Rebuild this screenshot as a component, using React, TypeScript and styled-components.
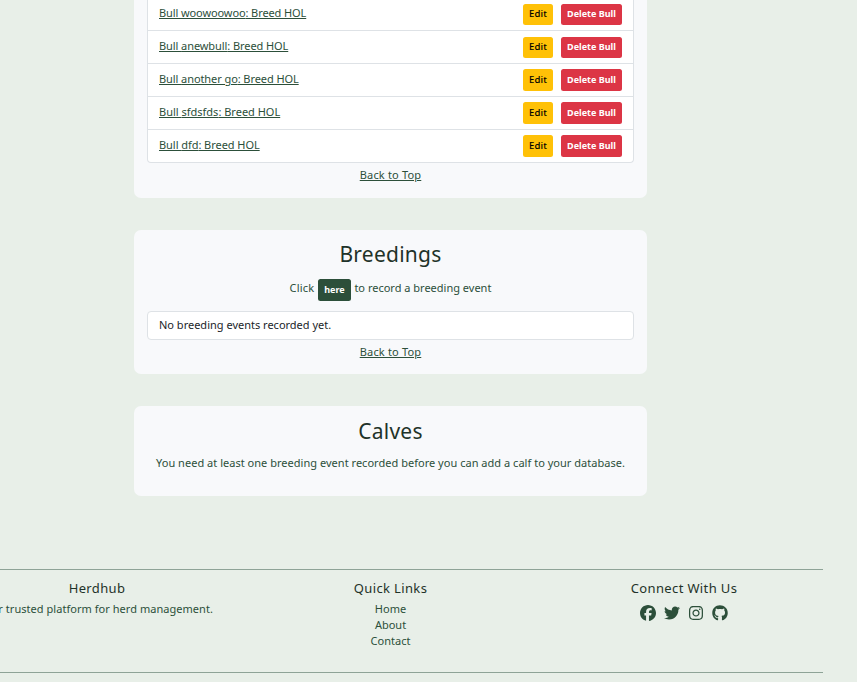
import React from "react";
import styled, { createGlobalStyle } from "styled-components";
import { FaFacebook, FaTwitter, FaInstagram, FaGithub } from "react-icons/fa6";

const GlobalStyle = createGlobalStyle`
  * { box-sizing: border-box; }
  html, body { margin: 0; background: #e8efe8; overflow: hidden; }
  body {
    font-family: "Noto Sans", "Open Sans", sans-serif;
    font-size: 11px;
    line-height: 16px;
    color: #2c4f3a;
  }
  p, h2, h3, ul { margin: 0; padding: 0; font-weight: 400; }
`;

const Page = styled.div`
  display: flex;
  flex-direction: column;
  height: 682px;
  overflow: hidden;
`;

const Sections = styled.main`
  display: flex;
  flex-direction: column;
  gap: 32px;
  width: 513px;
  margin-left: 134px;
`;

const Card = styled.section<{ $height: number; $padTop: number; $continued?: boolean }>`
  height: ${(p) => p.$height}px;
  flex: none;
  padding: ${(p) => p.$padTop}px 13px 0;
  background: #f8f9fb;
  border-radius: ${(p) => (p.$continued ? "0 0 7px 7px" : "7px")};
  text-align: center;
`;

const BullList = styled.ul`
  list-style: none;
  background: #fff;
  border: 1px solid #dee2e6;
  border-top: 0;
  border-radius: 0 0 4px 4px;
`;

const TextLink = styled.a<{ $spacing?: number }>`
  color: #2c4f3a;
  text-decoration: underline;
  text-decoration-thickness: 1px;
  text-underline-offset: 1px;
  letter-spacing: ${(p) => p.$spacing ?? 0}px;
  white-space: nowrap;
`;

const tones = {
  warning: { bg: "#ffc107", fg: "#000" },
  danger: { bg: "#dc3545", fg: "#fff" },
  primary: { bg: "#2c4f3a", fg: "#fff" },
};

const Button = styled.button<{ $tone: keyof typeof tones; $width: number }>`
  flex: none;
  width: ${(p) => p.$width}px;
  height: 22px;
  padding: 0;
  border: 0;
  border-radius: 2.5px;
  background: ${(p) => tones[p.$tone].bg};
  color: ${(p) => tones[p.$tone].fg};
  font: ${(p) => (p.$tone === "warning" ? "500 9.5px" : "700 9px")}/20px "Noto Sans", sans-serif;
  letter-spacing: ${(p) => (p.$tone === "warning" ? 0.2 : 0)}px;
  white-space: nowrap;
`;

const Actions = styled.div`
  display: flex;
  gap: 8px;
`;

const BullRow = styled.li`
  display: flex;
  align-items: flex-start;
  justify-content: space-between;
  height: 33px;
  padding: 5px 11px 0;
  border-bottom: 1px solid #dee2e6;
  > a { margin-top: 2px; }
  &:first-child { height: 31px; padding-top: 4px; }
  &:first-child > a { margin-top: 1px; }
  &:nth-child(2) { padding-top: 6px; }
  &:nth-child(2) > a { margin-top: 1px; }
  &:nth-child(-n + 2) ${Button} { height: 21px; padding-bottom: 1px; }
  &:last-child { border-bottom: 0; height: 32px; }
`;

const BackToTop = styled.p`
  padding-top: 4px;
`;

const SectionTitle = styled.h2`
  font-size: 21px;
  line-height: 30px;
  letter-spacing: 0.25px;
  color: #1f3329;
`;

const Prompt = styled.p`
  display: flex;
  justify-content: center;
  gap: 3.5px;
  height: 31px;
  margin-top: 10px;
  line-height: 18px;
  white-space: nowrap;
`;

const PromptLead = styled.span`
  letter-spacing: 0.2px;
`;

const EmptyNotice = styled.div`
  height: 29px;
  margin-top: 1px;
  padding-left: 11px;
  border: 1px solid #dee2e6;
  border-radius: 4px;
  background: #fff;
  color: #212529;
  line-height: 26px;
  text-align: left;
`;

const Note = styled.p`
  margin-top: 9px;
  letter-spacing: 0.025px;
  white-space: nowrap;
`;

const Footer = styled.footer`
  display: grid;
  grid-template-columns: 278px 309px 278px;
  flex: none;
  width: 865px;
  height: 104px;
  margin: 73px 0 0 -42px;
  padding-top: 9px;
  border-top: 1px solid #8ea397;
  border-bottom: 1px solid #8ea397;
  text-align: center;
`;

const FooterTitle = styled.h3`
  margin-bottom: 4px;
  font-size: 13px;
  line-height: 18px;
  letter-spacing: 0.36px;
  color: #1f3329;
`;

const Tagline = styled.p`
  padding-right: 2px;
  letter-spacing: 0.04px;
  white-space: nowrap;
`;

const FooterLink = styled.a`
  display: block;
`;

const Socials = styled.div`
  display: flex;
  justify-content: center;
  gap: 8px;
  padding-top: 4px;
  svg { width: 16px; height: 16px; }
`;

const bulls = [
  { name: "woowoowoo", spacing: -0.1 },
  { name: "anewbull", spacing: -0.08 },
  { name: "another go", spacing: -0.08 },
  { name: "sfdsfds", spacing: 0 },
  { name: "dfd", spacing: -0.05 },
];

export default function App() {
  return (
    <>
      <GlobalStyle />
      <Page>
        <Sections>
          <Card $height={198} $padTop={0} $continued>
            <BullList>
              {bulls.map(({ name, spacing }) => (
                <BullRow key={name}>
                  <TextLink $spacing={spacing}>Bull {name}: Breed HOL</TextLink>
                  <Actions>
                    <Button $tone="warning" $width={30}>Edit</Button>
                    <Button $tone="danger" $width={61}>Delete Bull</Button>
                  </Actions>
                </BullRow>
              ))}
            </BullList>
            <BackToTop><TextLink $spacing={0.18}>Back to Top</TextLink></BackToTop>
          </Card>
          <Card $height={144} $padTop={9}>
            <SectionTitle>Breedings</SectionTitle>
            <Prompt>
              <PromptLead>Click</PromptLead>
              <Button $tone="primary" $width={33}>here</Button>
              <span>to record a breeding event</span>
            </Prompt>
            <EmptyNotice>No breeding events recorded yet.</EmptyNotice>
            <BackToTop><TextLink $spacing={0.18}>Back to Top</TextLink></BackToTop>
          </Card>
          <Card $height={90} $padTop={10}>
            <SectionTitle>Calves</SectionTitle>
            <Note>You need at least one breeding event recorded before you can add a calf to your database.</Note>
          </Card>
        </Sections>
        <Footer>
          <div>
            <FooterTitle>Herdhub</FooterTitle>
            <Tagline>Your trusted platform for herd management.</Tagline>
          </div>
          <div>
            <FooterTitle>Quick Links</FooterTitle>
            <FooterLink>Home</FooterLink>
            <FooterLink>About</FooterLink>
            <FooterLink>Contact</FooterLink>
          </div>
          <div>
            <FooterTitle>Connect With Us</FooterTitle>
            <Socials><FaFacebook /><FaTwitter /><FaInstagram /><FaGithub /></Socials>
          </div>
        </Footer>
      </Page>
    </>
  );
}
